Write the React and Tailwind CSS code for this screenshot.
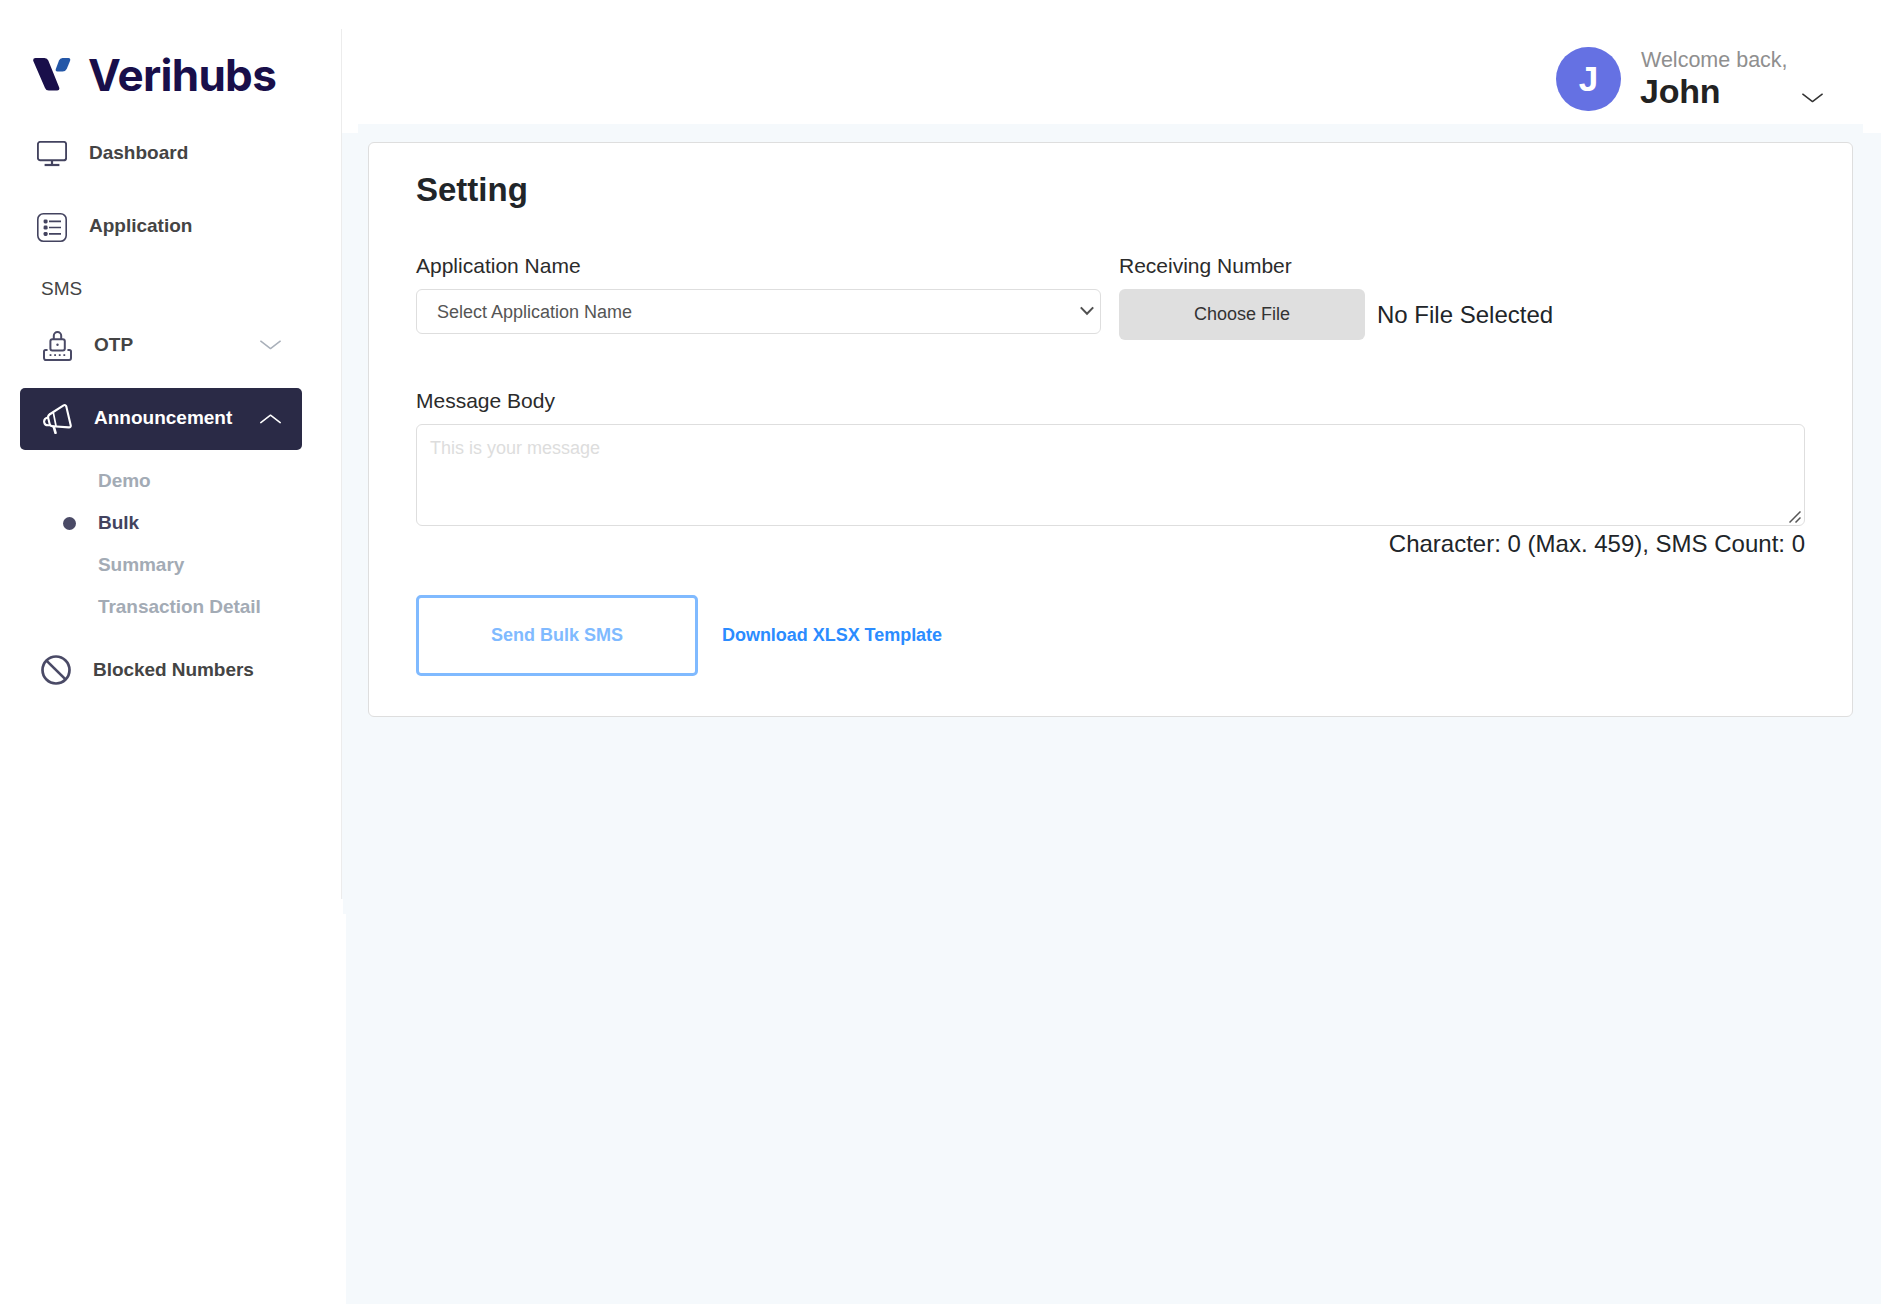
import { useState } from 'react';

const DashboardIcon = () => (
  <svg width="30" height="26" viewBox="0 0 30 26" fill="none" stroke="#43435f">
    <rect x="0.9" y="0.9" width="28.2" height="18.4" rx="2.4" strokeWidth="1.9" />
    <path d="M15 19.5v4" strokeWidth="2.2" />
    <path d="M7.6 24h14.8" strokeWidth="2.2" />
  </svg>
);

const ApplicationIcon = () => (
  <svg width="30" height="29" viewBox="0 0 30 29" fill="none" stroke="#43435f">
    <rect x="0.8" y="0.8" width="28.4" height="27.4" rx="5.6" strokeWidth="1.6" />
    <path d="M12 8.4h12M12 14.5h12M12 20.9h12" strokeWidth="1.7" />
    <g fill="#43435f" stroke="none">
      <rect x="6.6" y="6.4" width="4" height="4" rx="1.4" />
      <rect x="6.6" y="12.6" width="4" height="4" rx="1.4" />
      <rect x="6.6" y="18.9" width="4" height="4" rx="1.4" />
    </g>
  </svg>
);

const OtpIcon = () => (
  <svg width="29" height="30" viewBox="0 0 29 30" fill="none" stroke="#4a4a66" strokeWidth="2" strokeLinecap="round" strokeLinejoin="round">
    <path d="M10.8 8V4.8a3.7 3.7 0 0 1 7.4 0V8" />
    <rect x="7.4" y="8.2" width="14.4" height="11.4" rx="2" />
    <path d="M3.8 18.9H2.6A1.6 1.6 0 0 0 1 20.5v6.6A1.9 1.9 0 0 0 2.9 29h23.2a1.9 1.9 0 0 0 1.9-1.9v-6.6a1.6 1.6 0 0 0-1.6-1.6h-1.2" />
    <g fill="#4a4a66" stroke="none">
      <circle cx="14.5" cy="13.8" r="1.2" />
      <rect x="6.6" y="23.2" width="1.8" height="1.8" />
      <rect x="11.2" y="23.2" width="1.8" height="1.8" />
      <rect x="15.8" y="23.2" width="1.8" height="1.8" />
      <rect x="20.4" y="23.2" width="1.8" height="1.8" />
    </g>
  </svg>
);

const MegaphoneIcon = () => (
  <svg width="29" height="30" viewBox="0 0 29 30" fill="none" stroke="#ffffff" strokeWidth="2.1" strokeLinecap="round" strokeLinejoin="round">
    <path d="M7.2 10 20.6 1.4c1.2-.7 2.3-.3 2.7 1l4.4 18.8c.3 1.500-.4 2.300-1.900 2.200L9.500 22.200" />
    <path d="M10.400 8.800 13 22" strokeWidth="1.700" />
    <path d="M7.200 10c-2 1-2.400 2.200-2 4l1.400 5.800c.4 1.600 1.400 2.400 2.900 2.400" />
    <path d="M4.800 13.400c-2.600.6-4 2.400-3.600 4.900.4 2.200 2.200 3.300 5 2.900" />
    <path d="M10.800 22.800 12.500 28.800" strokeWidth="2.600" />
  </svg>
);

const BlockedIcon = () => (
  <svg width="30" height="30" viewBox="0 0 30 30" fill="none" stroke="#4a4a66" strokeWidth="2.7">
    <circle cx="15" cy="15" r="13.5" />
    <path d="M5.2 5.4 24.8 24.6" />
  </svg>
);

const Chevron = ({ up, color, width = 21 }) => (
  <svg width={width} height="10" viewBox="0 0 21 10" fill="none" stroke={color} strokeWidth="1.5" strokeLinecap="round" strokeLinejoin="round">
    <path d={up ? 'M0.8 8.6 10.5 1.2 20.2 8.6' : 'M0.8 1.2 10.5 8.6 20.2 1.2'} />
  </svg>
);

const Logo = () => (
  <div className="flex h-[86px] items-center pl-[33px] pt-[5px]">
    <svg width="38" height="33" viewBox="0 0 38 33">
      <path d="M2.5 0H11.5Q14.3 0 15.300 2.6L26.2 29.600Q27 32.600 24.200 32.600H15.800Q13 32.600 12 30L.3 3Q-.4 0 2.500 0Z" fill="#190f4a" />
      <path d="M29.500 0H35.500Q38 .3 37 3L33.800 10.800Q32.600 13.600 29.600 13.600H24.400Q22 13.400 22.800 11L26 2.600Q27 0 29.500 0Z" fill="#2457a7" />
    </svg>
    <span className="ml-[17px] font-[Inter,sans-serif] text-[44px] font-bold leading-none tracking-[-0.7px] text-[#190f4a]">
      Verihubs
    </span>
  </div>
);

const submenu = [
  { label: 'Demo' },
  { label: 'Bulk', active: true },
  { label: 'Summary' },
  { label: 'Transaction Detail' },
];

const Sidebar = () => (
  <aside className="flex w-[346px] shrink-0 flex-col">
    <div className="flex h-[899px]">
      <div className="flex w-[342px] flex-col bg-white pt-[29px]">
        <nav className="flex flex-1 flex-col border-r border-[#ececec] text-[19px] font-bold leading-none text-[#444444]">
          <Logo />
          <a className="flex h-[74px] items-center pl-[37px]">
            <span className="pt-[3px]"><DashboardIcon /></span>
            <span className="ml-[22px]">Dashboard</span>
          </a>
          <a className="flex h-[72px] items-center pl-[37px]">
            <span className="pt-1"><ApplicationIcon /></span>
            <span className="ml-[22px]">Application</span>
          </a>
          <div className="flex h-[55px] items-center pl-[41px] font-normal">SMS</div>
          <a className="flex h-[57px] items-center pl-[43px]">
            <span className="pt-[3px]"><OtpIcon /></span>
            <span className="ml-[22px] flex-1">OTP</span>
            <span className="mr-[60px] pt-px"><Chevron color="#a9b0ba" /></span>
          </a>
          <a className="mt-[15px] ml-5 flex h-[62px] w-[282px] items-center rounded-[5px] bg-[#2a2a46] pl-[23px] text-white">
            <MegaphoneIcon />
            <span className="ml-[22px] flex-1 pb-[3px]">Announcement</span>
            <span className="mr-[21px]"><Chevron up color="#ffffff" /></span>
          </a>
          <ul className="pt-2.5">
            {submenu.map((item) => (
              <li
                key={item.label}
                className={`flex h-[42px] items-center pl-[63px] last:h-[41px] ${item.active ? 'text-[#43435f]' : 'text-[#a3abb5]'}`}
              >
                <span className={`mr-[22px] h-[13px] w-[13px] rounded-full ${item.active ? 'bg-[#4a4a66]' : ''}`} />
                <span className="pb-px tracking-[-0.05px]">{item.label}</span>
              </li>
            ))}
          </ul>
          <a className="flex h-[85px] items-center pl-[41px]">
            <BlockedIcon />
            <span className="ml-[22px] pb-px tracking-[-0.05px]">Blocked Numbers</span>
          </a>
        </nav>
      </div>
      <div className="h-[133px] w-1 bg-white" />
    </div>
    <div className="h-[15px] w-[343px] bg-white" />
    <div className="w-[346px] flex-1 bg-white" />
  </aside>
);

const Header = () => (
  <header>
    <div className="flex h-[124px] justify-end bg-white pr-[57px] pt-[47px]">
      <div className="flex h-16 w-[65px] items-center justify-center rounded-full bg-[#6571e3] text-[35px] font-bold text-white">
        J
      </div>
      <div className="ml-5 w-[160px]">
        <p className="pt-px text-[21.5px] leading-[24px] text-[#8f8f8f]">Welcome back,</p>
        <p className="-ml-px text-[34px] font-bold leading-[39px] tracking-[-0.2px] text-[#222222]">John</p>
      </div>
      <div className="pt-[46px]">
        <Chevron color="#333333" width={23} />
      </div>
    </div>
    <div className="flex h-[9px] justify-between">
      <div className="w-3 bg-white" />
      <div className="w-[18px] bg-white" />
    </div>
  </header>
);

const SettingCard = () => {
  const [message, setMessage] = useState('');
  const smsCount = Math.ceil(message.length / 153);

  return (
    <section className="ml-[22px] mt-[9px] h-[575px] w-[1485px] rounded-[6px] border border-[#dedede] bg-white px-[47px] pt-[27px]">
      <h1 className="text-[33px] font-bold leading-[40px] text-[#212529]">Setting</h1>

      <div className="mt-[41px] flex gap-[18px]">
        <div className="w-[685px]">
          <label className="block h-[38px] text-[21px] leading-[30px]">Application Name</label>
          <div className="relative">
            <select className="h-[45px] w-full appearance-none rounded-[6px] border border-[#dedede] bg-white pl-5 pt-px text-[18px] text-[#555555]">
              <option>Select Application Name</option>
            </select>
            <svg className="pointer-events-none absolute right-[7px] top-[17px]" width="14" height="10" viewBox="0 0 14 10" fill="none" stroke="#505050" strokeWidth="2">
              <path d="M0.8 1.4 7 7.8 13.2 1.4" />
            </svg>
          </div>
        </div>
        <div>
          <label className="block h-[38px] text-[21px] leading-[30px]">Receiving Number</label>
          <div className="flex items-center">
            <button className="h-[51px] w-[246px] rounded-[6px] bg-[#dfdfdf] text-[18px] text-[#333333]">
              Choose File
            </button>
            <span className="ml-3 text-[24px] leading-none text-[#212529]">No File Selected</span>
          </div>
        </div>
      </div>

      <label className="mt-[46px] block h-[38px] text-[21px] leading-[30px]">Message Body</label>
      <div className="relative h-[102px]">
        <textarea
          value={message}
          maxLength={459}
          onChange={(e) => setMessage(e.target.value)}
          placeholder="This is your message"
          className="h-full w-full resize-none rounded-[6px] border border-[#dedede] px-[13px] py-[10px] text-[18px] leading-[27px] placeholder:text-[#dddddd]"
        />
        <svg className="absolute bottom-[3px] right-1" width="12" height="12" viewBox="0 0 12 12" stroke="#555555" strokeWidth="1.5">
          <path d="M0.5 11.5 11.5 0.5M6.5 11.5 11.5 6.5" />
        </svg>
      </div>
      <p className="text-right text-[24px] leading-[36px] text-[#212529]">
        Character: {message.length} (Max. 459), SMS Count: {smsCount}
      </p>

      <div className="mt-[33px] flex items-center gap-6 text-[18px] font-bold">
        <button className="h-[81px] w-[282px] rounded-[5px] border-[3px] border-[#80baff] text-[#80baff]">
          Send Bulk SMS
        </button>
        <a className="tracking-[-0.03px] text-[#2b8cff]">Download XLSX Template</a>
      </div>
    </section>
  );
};

const App = () => {
  return (
    <div className="flex h-[1304px] w-[1881px] overflow-hidden bg-[#f5f9fc] font-['Liberation_Sans',Arial,sans-serif] text-[#2b2b2b]">
      <Sidebar />
      <main className="flex-1">
        <Header />
        <SettingCard />
      </main>
    </div>
  );
};

export default App;
